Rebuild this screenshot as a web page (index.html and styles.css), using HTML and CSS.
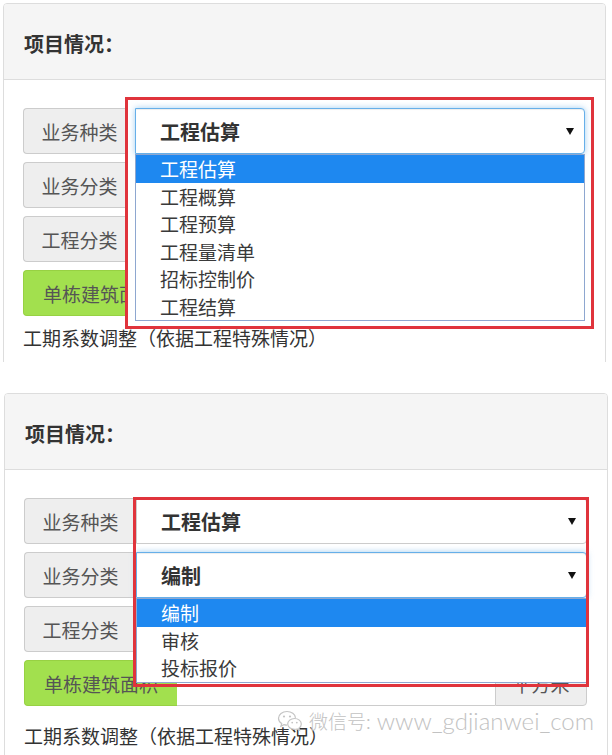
FILE: index.html
```html
<!DOCTYPE html>
<html lang="zh-CN">
<head>
    <meta charset="UTF-8">
    <meta name="viewport" content="width=device-width, initial-scale=1.0">
    <title>项目情况</title>
    <link rel="stylesheet" href="styles.css">
</head>
<body>
    <!-- Capture 1 : liste "业务种类" ouverte -->
    <div class="shot shot-a">
        <div class="panel">
            <div class="panel-heading">项目情况：</div>
            <div class="panel-body">
                <div class="input-group">
                    <span class="addon">业务种类</span>
                    <div class="select focus">
                        <span>工程估算</span><i class="caret"></i>
                        <ul class="options">
                            <li class="active">工程估算</li>
                            <li>工程概算</li>
                            <li>工程预算</li>
                            <li>工程量清单</li>
                            <li>招标控制价</li>
                            <li>工程结算</li>
                        </ul>
                    </div>
                </div>
                <div class="input-group">
                    <span class="addon">业务分类</span>
                    <div class="select"><span></span><i class="caret"></i></div>
                </div>
                <div class="input-group">
                    <span class="addon">工程分类</span>
                    <div class="select"><span></span><i class="caret"></i></div>
                </div>
                <div class="input-group">
                    <span class="addon green">单栋建筑面积</span>
                    <div class="input"></div>
                    <span class="addon unit">平方米</span>
                </div>
                <p class="note">工期系数调整（依据工程特殊情况）</p>
                <div class="mark mark-a"></div>
            </div>
        </div>
    </div>

    <!-- Capture 2 : liste "业务分类" ouverte -->
    <div class="shot shot-b">
        <div class="panel">
            <div class="panel-heading">项目情况：</div>
            <div class="panel-body">
                <div class="input-group">
                    <span class="addon">业务种类</span>
                    <div class="select"><span>工程估算</span><i class="caret"></i></div>
                </div>
                <div class="input-group">
                    <span class="addon">业务分类</span>
                    <div class="select focus">
                        <span>编制</span><i class="caret"></i>
                        <ul class="options">
                            <li class="active">编制</li>
                            <li>审核</li>
                            <li>投标报价</li>
                        </ul>
                    </div>
                </div>
                <div class="input-group">
                    <span class="addon">工程分类</span>
                    <div class="select"><span></span><i class="caret"></i></div>
                </div>
                <div class="input-group">
                    <span class="addon green">单栋建筑面积</span>
                    <div class="input"></div>
                    <span class="addon unit">平方米</span>
                </div>
                <p class="note">工期系数调整（依据工程特殊情况）</p>
                <div class="mark mark-b"></div>
            </div>
        </div>

        <div class="watermark">
            <svg width="26" height="24" viewBox="0 0 26 24">
                <path d="M10 2.5c-4.7 0-8.5 3-8.5 6.8 0 2.2 1.2 4.1 3.2 5.3l-.8 2.6 3-1.6c1 .3 2 .5 3.1.5" fill="none" stroke="#c4c4c4" stroke-width="1.2"/>
                <path d="M10 2.5c4.5 0 8.2 2.8 8.5 6.4" fill="none" stroke="#c4c4c4" stroke-width="1.2"/>
                <circle cx="7" cy="7.5" r="1.1" fill="#c4c4c4"/>
                <circle cx="13" cy="7.5" r="1.1" fill="#c4c4c4"/>
                <path d="M17.5 9.5c3.8 0 6.8 2.5 6.8 5.5 0 1.7-.9 3.2-2.4 4.2l.6 2.1-2.4-1.3c-.8.2-1.7.4-2.6.4-3.8 0-6.8-2.5-6.8-5.4s3-5.5 6.8-5.5z" fill="#fff" stroke="#c4c4c4" stroke-width="1.2"/>
                <circle cx="15.2" cy="13.6" r=".9" fill="#c4c4c4"/>
                <circle cx="19.8" cy="13.6" r=".9" fill="#c4c4c4"/>
            </svg>
            <span class="wm-cn">微信号:</span>
            <span class="wm-en">www_gdjianwei_com</span>
        </div>
    </div>
</body>
</html>
```

FILE: styles.css
```css
* {
    box-sizing: border-box;
}
html, body {
    height: 755px;
    overflow: hidden;
}
body {
    margin: 0;
    background: #fff;
    font-family: "Noto Sans CJK SC", "Microsoft YaHei", sans-serif;
    font-size: 19px;
    color: #333;
}
.shot {
    position: relative;
    width: 603px;
    margin-left: 3px;
}
.shot-a {
    margin-top: 3px;
    height: 359px;
    overflow: hidden;
}
.shot-a .panel {
    height: 372px;
}
.shot-b {
    width: 604px;
    margin-left: 4px;
    margin-top: 31px;
}
.panel {
    border: 1px solid #ddd;
    border-radius: 4px;
    background: #fff;
}
.panel-heading {
    height: 76px;
    display: flex;
    align-items: center;
    padding: 3px 0 0 20px;
    background: #f5f5f5;
    border-bottom: 1px solid #ddd;
    border-radius: 3px 3px 0 0;
    font-size: 20px;
    font-weight: bold;
    color: #333;
}
.panel-body {
    position: relative;
    padding: 28px 20px 12px 19px;
}
.input-group {
    display: flex;
    height: 46px;
    margin-bottom: 8px;
}
.addon {
    flex: none;
    width: 112px;
    display: flex;
    align-items: center;
    justify-content: center;
    background: #eee;
    border: 1px solid #ccc;
    border-right: 0;
    border-radius: 4px 0 0 4px;
    color: #555;
}
.addon.green {
    width: 153px;
    background: #a2e04e;
    border-color: #97d143;
}
.addon.unit {
    width: 92px;
    border-right: 1px solid #ccc;
    border-radius: 0 4px 4px 0;
}
.input {
    flex: 1;
    background: #fff;
    border-top: 1px solid #ccc;
    border-bottom: 1px solid #ccc;
}
.select {
    flex: 1;
    position: relative;
    display: flex;
    align-items: center;
    justify-content: space-between;
    padding: 0 10px 0 24px;
    background: #fff;
    border: 1px solid #ccc;
    border-radius: 0 4px 4px 0;
    font-size: 20px;
    font-weight: bold;
    color: #333;
}
.select.focus {
    z-index: 2;
    border-color: #66afe9;
    box-shadow: inset 0 1px 1px rgba(0, 0, 0, 0.075), 0 0 6px rgba(102, 175, 233, 0.6);
}
.caret {
    width: 0;
    height: 0;
    border-left: 4px solid transparent;
    border-right: 4px solid transparent;
    border-top: 7px solid #111;
}
.options {
    position: absolute;
    top: calc(100% + 1px);
    left: -1px;
    right: -1px;
    z-index: 3;
    margin: 0;
    padding: 0;
    list-style: none;
    background: #fff;
    border: 1px solid #8ea7d0;
    font-size: 19px;
    font-weight: normal;
}
.options li {
    height: 27.5px;
    line-height: 27.5px;
    padding-left: 24px;
    color: #3a3a3a;
}
.options li.active {
    background: #1e88f0;
    color: #fff;
}
.note {
    margin: 10px 0 0;
    line-height: 24px;
    color: #333;
}
.shot-b .note {
    margin-top: 18px;
}
.mark {
    position: absolute;
    border: 3px solid #e0343c;
}
.mark-a {
    left: 121px;
    top: 17px;
    width: 469px;
    height: 232px;
    background: #fff;
    z-index: 1;
}
.mark-b {
    left: 128px;
    top: 27px;
    width: 456px;
    height: 190px;
    z-index: 4;
}
.watermark {
    position: absolute;
    left: 273px;
    top: 313px;
    z-index: 5;
    display: flex;
    align-items: center;
    gap: 6px;
    font-family: "Lato", "Noto Sans CJK SC", sans-serif;
    font-weight: 300;
    color: #c2c2c2;
    white-space: nowrap;
    text-shadow: 0 0 2px #fff, 0 0 2px #fff;
}
.wm-cn {
    font-family: "Noto Sans CJK SC", sans-serif;
    font-size: 19px;
}
.wm-en {
    font-size: 24px;
}
```
